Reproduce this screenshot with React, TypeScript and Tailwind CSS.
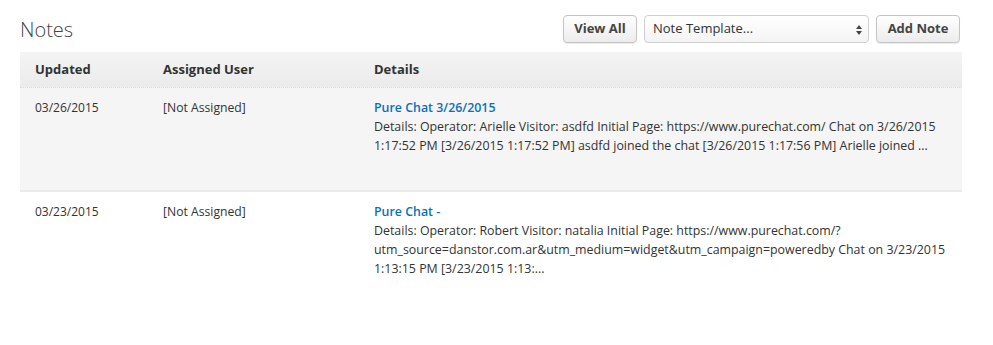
import React from "react";

const rows = [
  {
    date: "03/26/2015",
    user: "[Not Assigned]",
    title: "Pure Chat 3/26/2015",
    lines: [
      "Details: Operator: Arielle Visitor: asdfd Initial Page: https://www.purechat.com/ Chat on 3/26/2015",
      "1:17:52 PM [3/26/2015 1:17:52 PM] asdfd joined the chat [3/26/2015 1:17:56 PM] Arielle joined ...",
    ],
    shaded: true,
  },
  {
    date: "03/23/2015",
    user: "[Not Assigned]",
    title: "Pure Chat -",
    lines: [
      "Details: Operator: Robert Visitor: natalia Initial Page: https://www.purechat.com/?",
      "utm_source=danstor.com.ar&utm_medium=widget&utm_campaign=poweredby Chat on 3/23/2015",
      "1:13:15 PM [3/23/2015 1:13:...",
    ],
    shaded: false,
  },
];

export default function App() {
  return (
    <div
      className="w-[993px] h-[345px] bg-white pl-[20px] pr-[31px] pt-[15px] text-[#333]"
      style={{ fontFamily: '"Open Sans", "Liberation Sans", sans-serif' }}
    >
      <div className="flex items-center justify-between h-[28px]">
        <h1 className="text-[20px] font-light text-[#444] leading-none mt-[1px]">Notes</h1>
        <div className="flex items-center gap-[7px] mr-[2px]">
          <button className="h-[28px] w-[74px] rounded-[4px] border border-[#c4c4c4] bg-gradient-to-b from-white to-[#ececec] text-[13px] font-bold text-[#444] shadow-[0_1px_1px_rgba(0,0,0,0.08)]">
            View All
          </button>
          <div className="relative h-[28px] w-[225px] rounded-[4px] border border-[#cfcfcf] bg-gradient-to-b from-white to-[#f4f4f4] flex items-center pl-[8px] text-[13px] text-[#333]">
            Note Template...
            <svg className="absolute right-[6px] top-[9px]" width="6" height="10" viewBox="0 0 6 10">
              <path d="M3 0 L6 4 L0 4 Z" fill="#444" />
              <path d="M0 6 L6 6 L3 10 Z" fill="#444" />
            </svg>
          </div>
          <button className="h-[28px] w-[84px] rounded-[4px] border border-[#c4c4c4] bg-gradient-to-b from-white to-[#ececec] text-[13px] font-bold text-[#444] shadow-[0_1px_1px_rgba(0,0,0,0.08)]">
            Add Note
          </button>
        </div>
      </div>

      <div className="mt-[9px]">
        <div className="flex h-[36px] items-center bg-gradient-to-b from-[#f4f4f4] to-[#ebebeb] border-b border-dotted border-[#dcdcdc] text-[13px] font-bold text-[#333]">
          <div className="w-[128px] pl-[15px]">Updated</div>
          <div className="w-[211px] pl-[15px]">Assigned User</div>
          <div className="flex-1 pl-[15px]">Details</div>
        </div>
        {rows.map((r, i) => (
          <div
            key={i}
            className={
              r.shaded
                ? "flex min-h-[104px] pt-[10px] bg-[#f5f5f5] border-b-2 border-[#ebebeb] text-[12.4px] leading-[19px]"
                : "flex min-h-[104px] pt-[10px] bg-white text-[12.4px] leading-[19px]"
            }
          >
            <div className="w-[128px] pl-[15px] text-[12px]">{r.date}</div>
            <div className="w-[211px] pl-[15px] text-[12.2px]">{r.user}</div>
            <div className="flex-1 pl-[15px]">
              <div className="font-semibold text-[#0b6fbf]">{r.title}</div>
              {r.lines.map((l, j) => (
                <div key={j} className="whitespace-nowrap">
                  {l}
                </div>
              ))}
            </div>
          </div>
        ))}
      </div>
    </div>
  );
}
